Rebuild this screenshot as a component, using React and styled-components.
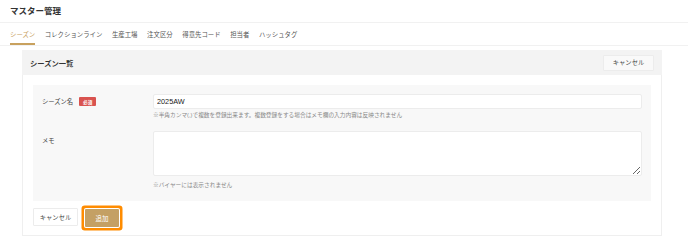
import React from "react";
import styled, { createGlobalStyle } from "styled-components";

const Global = createGlobalStyle`
  html, body { margin: 0; padding: 0; background: #fff; }
  body {
    font-family: "Liberation Sans", "Noto Sans CJK JP", sans-serif;
    color: #333;
    width: 688px;
    height: 248px;
    overflow: hidden;
  }
  * { box-sizing: border-box; }
`;

const Page = styled.div`
  display: flex;
  flex-direction: column;
  width: 688px;
`;

const TitleBar = styled.header`
  height: 23px;
  padding: 0 10px;
  display: flex;
  align-items: center;
  border-bottom: 1px solid #f1f1f1;
`;

const Title = styled.h1`
  margin: 0;
  font-size: 8.5px;
  line-height: 22px;
  font-weight: 700;
  color: #333;
`;

const Tabs = styled.nav`
  height: 23px;
  padding: 0 10px;
  display: flex;
  gap: 9.6px;
  border-bottom: 1px solid #f1f1f1;
`;

const Tab = styled.div`
  height: 22px;
  display: flex;
  align-items: center;
  font-size: 6.4px;
  color: ${(p) => (p.$active ? "#c8a15e" : "#555")};
  border-bottom: 2px solid ${(p) => (p.$active ? "#c8a15e" : "transparent")};
  padding-top: 2px;
  white-space: nowrap;
`;

const Card = styled.section`
  margin: 4px 26px 0 22px;
  border: 1px solid #efefef;
  display: flex;
  flex-direction: column;
`;

const CardHeader = styled.div`
  height: 25px;
  margin: -1px -1px 0 -1px;
  background: #f3f3f3;
  padding: 0 8px 0 8px;
  display: flex;
  align-items: center;
  justify-content: space-between;
`;

const CardTitle = styled.h2`
  margin: 0;
  font-size: 7.3px;
  font-weight: 700;
  color: #333;
`;

const Button = styled.button`
  font-family: inherit;
  display: flex;
  align-items: center;
  justify-content: center;
  padding: 0;
  cursor: pointer;
  border-radius: 1px;
  white-space: nowrap;
`;

const GhostButton = styled(Button)`
  width: ${(p) => p.$w}px;
  height: ${(p) => p.$h}px;
  background: ${(p) => p.$bg || "#fff"};
  border: 1px solid #ececec;
  color: #444;
  font-size: 6.3px;
`;

const PrimaryButton = styled(Button)`
  width: 34px;
  height: 18px;
  margin-top: 1px;
  background: #c4a064;
  border: none;
  color: #fff;
  font-size: 6.5px;
  box-shadow: 0 0 0 1px #fff, 0 0 0 3.5px #ff8c00;
`;

const CardBody = styled.div`
  padding: 10px 10px 8px 10px;
  display: flex;
  flex-direction: column;
  gap: 7px;
`;

const Panel = styled.div`
  background: #f8f8f8;
  padding: 9px 9px 11px 9px;
  display: flex;
  flex-direction: column;
  gap: 11px;
`;

const Row = styled.div`
  display: flex;
  align-items: flex-start;
`;

const Label = styled.div`
  width: 111px;
  flex: none;
  height: 15px;
  display: flex;
  align-items: center;
  gap: 6px;
  font-size: 6.3px;
  color: #444;
  padding-top: ${(p) => (p.$top ? "3px" : "0")};
`;

const Badge = styled.span`
  display: inline-flex;
  align-items: center;
  justify-content: center;
  width: 17px;
  height: 9px;
  background: #d9534f;
  color: #fff;
  font-size: 4.6px;
  font-weight: 700;
  border-radius: 1px;
`;

const Field = styled.div`
  flex: 1;
  display: flex;
  flex-direction: column;
  gap: ${(p) => p.$gap}px;
`;

const Input = styled.input`
  height: 15px;
  width: 100%;
  border: 1px solid #ececec;
  border-radius: 2px;
  background: #fff;
  padding: 0 3px;
  font-family: inherit;
  font-size: 7.3px;
  color: #222;
  outline: none;
`;

const TextArea = styled.textarea`
  display: block;
  height: 45px;
  width: 100%;
  border: 1px solid #ececec;
  border-radius: 2px;
  background: #fff;
  font-family: inherit;
  font-size: 7px;
  outline: none;
  resize: vertical;
`;

const Help = styled.p`
  margin: 0;
  font-size: 5.7px;
  line-height: 9px;
  color: #888;
  white-space: nowrap;
`;

const Actions = styled.div`
  display: flex;
  align-items: flex-start;
  gap: 7px;
`;

const tabs = ["シーズン", "コレクションライン", "生産工場", "注文区分", "得意先コード", "担当者", "ハッシュタグ"];

export default function App() {
  return (
    <>
      <Global />
      <Page>
        <TitleBar>
          <Title>マスター管理</Title>
        </TitleBar>
        <Tabs>
          {tabs.map((t, i) => (
            <Tab key={t} $active={i === 0}>
              {t}
            </Tab>
          ))}
        </Tabs>
        <Card>
          <CardHeader>
            <CardTitle>シーズン一覧</CardTitle>
            <GhostButton $w={51} $h={16} $bg="#f9f9f9">キャンセル</GhostButton>
          </CardHeader>
          <CardBody>
            <Panel>
              <Row>
                <Label>
                  シーズン名<Badge>必須</Badge>
                </Label>
                <Field $gap={2}>
                  <Input defaultValue="2025AW" />
                  <Help>※半角カンマ(,)で複数を登録出来ます。複数登録をする場合はメモ欄の入力内容は反映されません</Help>
                </Field>
              </Row>
              <Row>
                <Label $top>メモ</Label>
                <Field $gap={5}>
                  <TextArea />
                  <Help>※バイヤーには表示されません</Help>
                </Field>
              </Row>
            </Panel>
            <Actions>
              <GhostButton $w={45} $h={18}>キャンセル</GhostButton>
              <PrimaryButton>追加</PrimaryButton>
            </Actions>
          </CardBody>
        </Card>
      </Page>
    </>
  );
}
